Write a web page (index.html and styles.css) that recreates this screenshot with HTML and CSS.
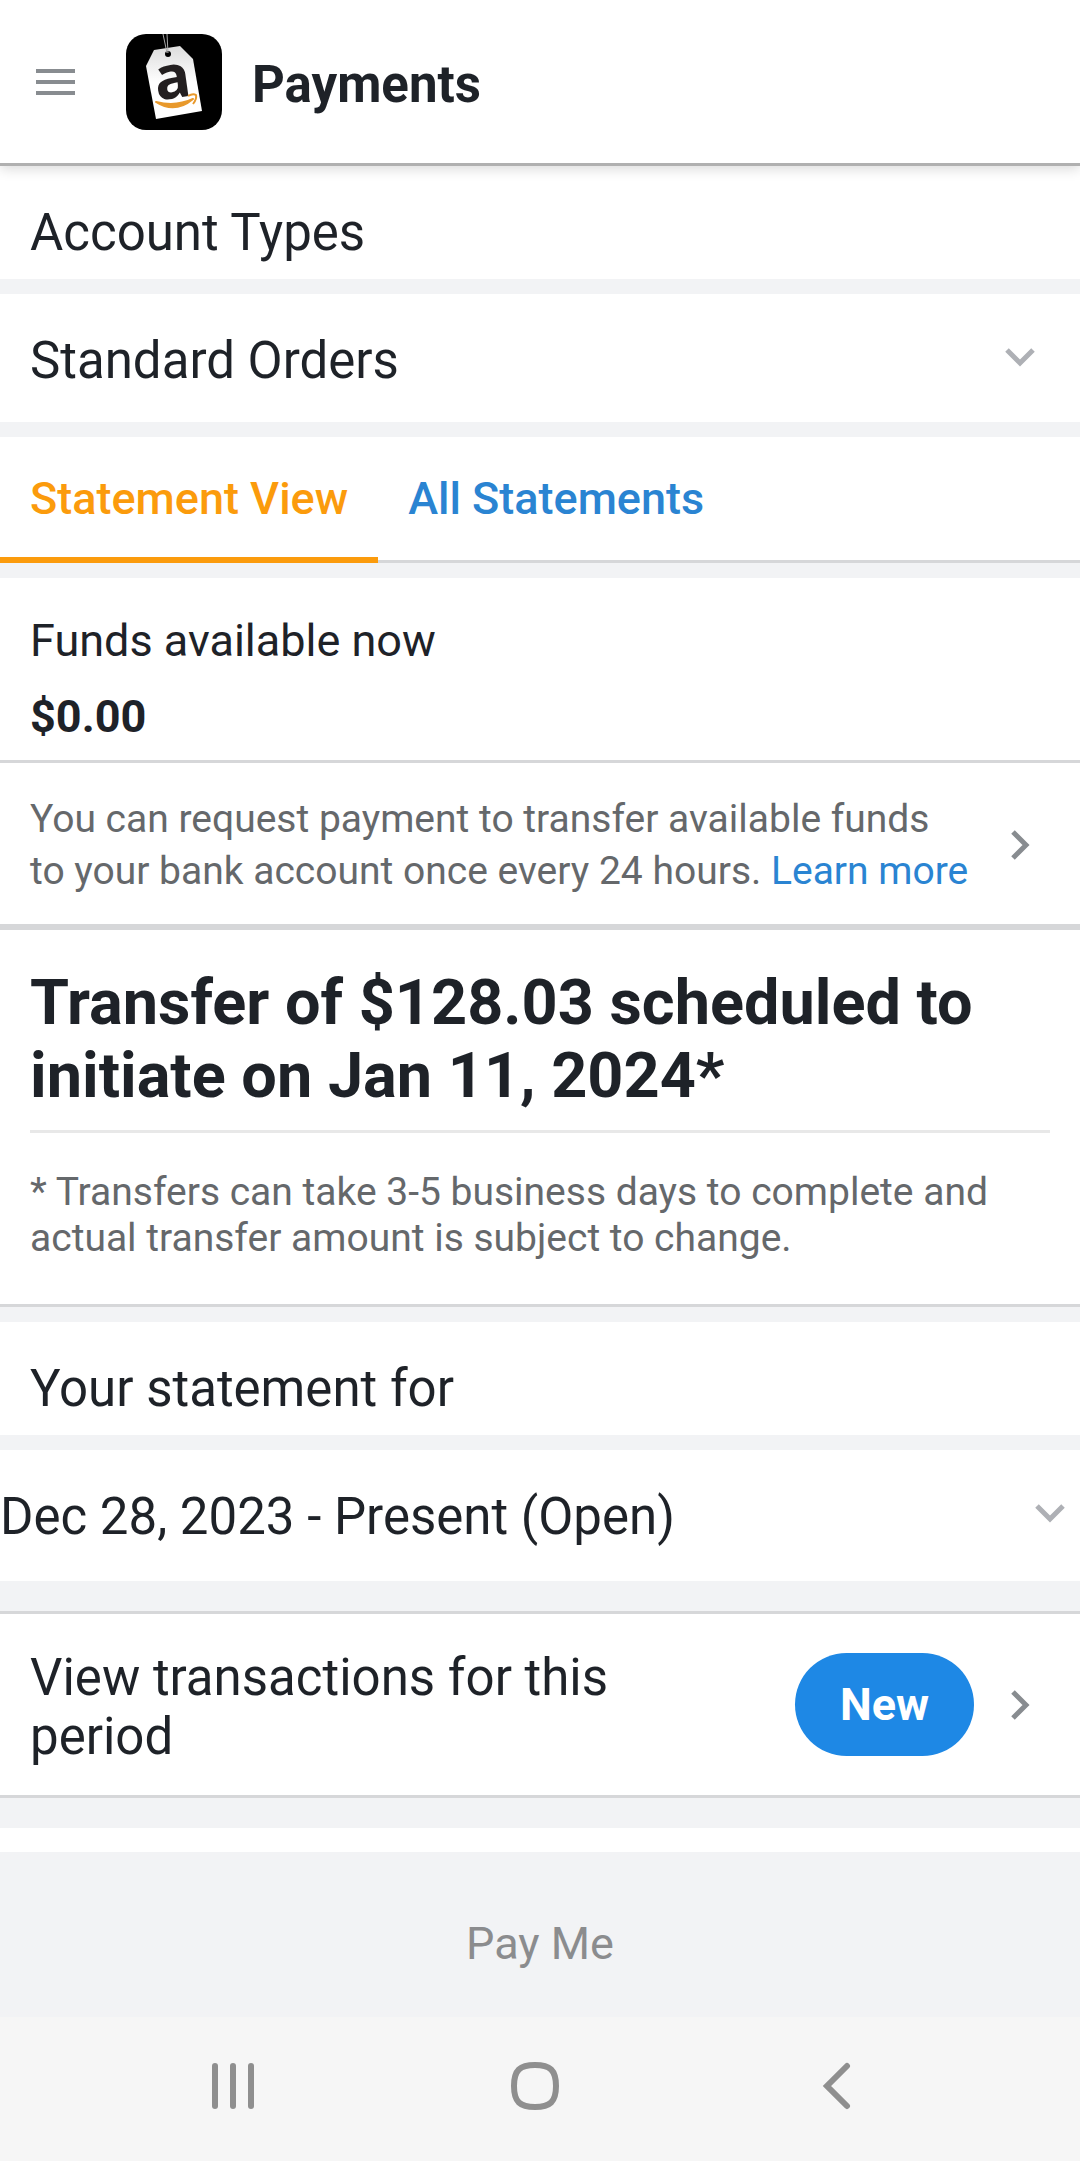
FILE: index.html
```html
<!doctype html>
<html lang="en">
  <head>
    <meta charset="UTF-8" />
    <meta name="viewport" content="width=device-width, initial-scale=1.0" />
    <title>Payments</title>
    <link rel="stylesheet" href="styles.css">
  </head>
  <body>
    <header class="app-bar">
      <button class="menu-button" type="button" aria-label="Menu">
        <svg width="39" height="26" viewBox="0 0 39 26" fill="#888c90">
          <rect width="39" height="4" />
          <rect y="11" width="39" height="4" />
          <rect y="22" width="39" height="4" />
        </svg>
      </button>
      <svg class="logo" width="96" height="96" viewBox="0 0 96 96" aria-hidden="true">
        <defs>
          <linearGradient id="tag" x1="0" y1="0" x2="0" y2="1">
            <stop offset="0" stop-color="#dcdcdc" />
            <stop offset="0.5" stop-color="#ffffff" />
          </linearGradient>
        </defs>
        <rect width="96" height="96" rx="20" />
        <path d="M28 16 L54 12 L67 25 L76 77 L30 85 L20 32 Z" fill="url(#tag)" />
        <circle cx="42" cy="20" r="3" />
        <path d="M37 0 L41 19 M41 0 L42 19" fill="none" stroke="#a8a8a8" />
        <text class="logo-letter" x="49" y="64" text-anchor="middle" transform="rotate(-8 49 64)">a</text>
        <path d="M30 68 Q49 80 67 65 Q50 73 30 68 Z" fill="#e8992c" stroke="#e8992c" stroke-width="2" stroke-linejoin="round" />
        <path d="M62 62 Q67 59 70 61 Q71 65 67 70" fill="none" stroke="#e8992c" stroke-width="2" />
      </svg>
      <h1>Payments</h1>
    </header>

    <main>
      <label class="section-label" for="account-type">Account Types</label>
      <div class="picker">
        <select id="account-type">
          <option>Standard Orders</option>
        </select>
        <svg class="chevron-down" width="30" height="19" viewBox="0 0 30 19">
          <path d="M2 2 L15 15 L28 2" fill="none" stroke="#aeb0b5" stroke-width="5" />
        </svg>
      </div>

      <nav class="tabs">
        <a class="tab active" href="#statement">Statement View</a>
        <a class="tab" href="#all">All Statements</a>
      </nav>

      <section class="funds">
        <p>Funds available now</p>
        <p class="amount">$0.00</p>
      </section>

      <div class="request-row">
        <p>
          You can request payment to transfer available funds<br />
          to your bank account once every 24 hours. <a href="#learn">Learn more</a>
        </p>
        <svg class="chevron-right" width="19" height="30" viewBox="0 0 19 30">
          <path d="M2 2 L15 15 L2 28" fill="none" stroke="#888c90" stroke-width="5" />
        </svg>
      </div>

      <section class="transfer">
        <h2>Transfer of $128.03 scheduled to initiate on Jan 11, 2024*</h2>
        <p>* Transfers can take 3-5 business days to complete and actual transfer amount is subject to change.</p>
      </section>

      <label class="section-label" for="period">Your statement for</label>
      <div class="picker picker-flush">
        <select id="period">
          <option>Dec 28, 2023 - Present (Open)</option>
        </select>
        <svg class="chevron-down" width="30" height="19" viewBox="0 0 30 19">
          <path d="M2 2 L15 15 L28 2" fill="none" stroke="#aeb0b5" stroke-width="5" />
        </svg>
      </div>

      <a class="transactions-row" href="#transactions">
        <span class="transactions-text">View transactions for this period</span>
        <span class="badge">New</span>
        <svg class="chevron-right" width="19" height="30" viewBox="0 0 19 30">
          <path d="M2 2 L15 15 L2 28" fill="none" stroke="#888c90" stroke-width="5" />
        </svg>
      </a>

      <div class="next-section"></div>
    </main>

    <button class="pay-button" type="button" disabled>Pay Me</button>

    <footer class="system-nav">
      <button type="button" aria-label="Recent apps">
        <svg width="48" height="48" viewBox="0 0 48 48" fill="#8f8f8f">
          <rect x="3" y="1" width="6" height="46" rx="3" />
          <rect x="21" y="1" width="6" height="46" rx="3" />
          <rect x="39" y="1" width="6" height="46" rx="3" />
        </svg>
      </button>
      <button type="button" aria-label="Home">
        <svg width="48" height="48" viewBox="0 0 48 48">
          <path d="M24 3 C39 3 45 8 45 24 C45 40 39 45 24 45 C9 45 3 40 3 24 C3 8 9 3 24 3 Z" fill="none" stroke="#8f8f8f" stroke-width="6" />
        </svg>
      </button>
      <button type="button" aria-label="Back">
        <svg width="48" height="48" viewBox="0 0 48 48">
          <path d="M34 4 L14 24 L34 44" fill="none" stroke="#8f8f8f" stroke-width="6" stroke-linecap="round" />
        </svg>
      </button>
    </footer>
  </body>
</html>
```
FILE: styles.css
```css
:root {
  --text: #1e2228;
  --muted: #65686b;
  --link: #2a84d2;
  --blue: #1e88e5;
  --orange: #fb9b0c;
  --gap: #f2f3f5;
  --line: #d6d7d9;
}

* {
  box-sizing: border-box;
}

body {
  display: flex;
  flex-direction: column;
  min-height: 100vh;
  margin: 0;
  background: var(--gap);
  color: var(--text);
  font-family: Roboto, 'Liberation Sans', sans-serif;
  font-size: 45px;
}

h1,
h2,
p {
  margin: 0;
}

a {
  color: var(--link);
  text-decoration: none;
}

button {
  padding: 0;
  border: none;
  background: none;
  font: inherit;
}

svg {
  display: block;
  flex: none;
}

main {
  display: flex;
  flex-direction: column;
  flex: 1;
}

/* Header */
.app-bar {
  position: relative;
  display: flex;
  align-items: center;
  padding: 34px 36px 33px;
  border-bottom: 3px solid #b0b0b0;
  background: #fff;
  box-shadow: 0 3px 12px rgba(0, 0, 0, 0.15);
}

.logo {
  margin: 0 30px 0 51px;
  overflow: visible;
}

.logo-letter {
  fill: #231f20;
  font-family: 'Open Sans', sans-serif;
  font-size: 60px;
  font-weight: 700;
}

h1 {
  padding-top: 5px;
  font-size: 51px;
  font-weight: 700;
  line-height: 60px;
}

/* Pickers */
.section-label {
  padding: 37px 30px 16px;
  background: #fff;
  font-size: 51px;
  line-height: 60px;
}

.picker {
  position: relative;
  margin: 15px 0;
  background: #fff;
}

.picker select {
  display: block;
  width: 100%;
  padding: 37px 90px 31px 30px;
  border: none;
  background: none;
  color: inherit;
  font: inherit;
  font-size: 51px;
  line-height: 60px;
  appearance: none;
}

.picker .chevron-down {
  position: absolute;
  top: 54px;
  right: 45px;
  pointer-events: none;
}

.picker-flush {
  margin-bottom: 30px;
}

.picker-flush select {
  padding-bottom: 34px;
  padding-left: 0;
}

.picker-flush .chevron-down {
  right: 15px;
}

/* Tabs */
.tabs {
  display: flex;
  margin-bottom: 15px;
  background: #fff;
  box-shadow: inset 0 -3px var(--line);
}

.tab {
  padding: 35px 30px 32px;
  border-bottom: 6px solid transparent;
  font-weight: 500;
  line-height: 53px;
}

.tab.active {
  border-bottom-color: var(--orange);
  color: var(--orange);
}

/* Funds */
.funds {
  padding: 36px 30px 17px;
  border-bottom: 3px solid var(--line);
  background: #fff;
  line-height: 53px;
}

.amount {
  margin-top: 23px;
  font-weight: 700;
}

.request-row {
  display: flex;
  align-items: center;
  justify-content: space-between;
  padding: 30px 50px 27px 30px;
  border-bottom: 6px solid var(--line);
  background: #fff;
  color: var(--muted);
  font-size: 39px;
  line-height: 52px;
}

.request-row p {
  flex: 1;
  padding-right: 30px;
}

/* Transfer */
.transfer {
  margin-bottom: 15px;
  padding: 36px 30px 43px;
  border-bottom: 3px solid var(--line);
  background: #fff;
}

.transfer h2 {
  padding-bottom: 18px;
  border-bottom: 3px solid #e8e8e8;
  font-size: 63px;
  font-weight: 700;
  line-height: 73px;
}

.transfer p {
  padding-top: 36px;
  color: var(--muted);
  font-size: 39px;
  line-height: 46px;
}

/* Transactions */
.transactions-row {
  display: flex;
  align-items: center;
  padding: 29px 50px 29px 30px;
  border-top: 3px solid var(--line);
  border-bottom: 3px solid var(--line);
  background: #fff;
  color: var(--text);
  font-size: 51px;
  line-height: 59px;
}

.transactions-text {
  flex: 1;
  padding: 5px 120px 0 0;
}

.badge {
  margin-right: 37px;
  padding: 25px 45px;
  border-radius: 52px;
  background: var(--blue);
  color: #fff;
  font-size: 45px;
  font-weight: 700;
  line-height: 53px;
}

.next-section {
  flex: 1;
  min-height: 24px;
  margin-top: 30px;
  background: #fff;
}

/* Bottom bars */
.pay-button {
  padding: 65px 30px 47px;
  background: #f2f3f5;
  color: #8b8c8e;
  line-height: 53px;
}

.system-nav {
  display: flex;
  padding: 45px 92px 51px 82px;
  background: #f6f6f6;
}

.system-nav button {
  display: flex;
  flex: 1;
  justify-content: center;
}
```
